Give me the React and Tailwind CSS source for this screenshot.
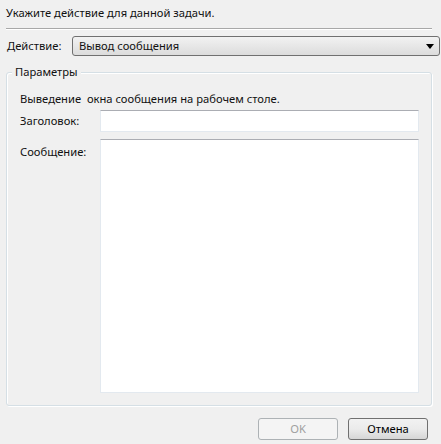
const font = { fontFamily: '"Noto Sans", "Open Sans", sans-serif' }

export default function App() {
  return (
    <div
      className="w-[441px] h-[444px] bg-[#f0f0f0] text-[11.2px] text-[#111] flex flex-col px-[6px] overflow-hidden"
      style={font}
    >
      {/* Header */}
      <div className="h-[28px] flex items-center leading-none pb-[2px]">
        Укажите действие для данной задачи.
      </div>
      <div className="h-[2px] mr-[3px] border-t border-[#a8a8a8] border-b border-b-white" />

      {/* Action row */}
      <div className="flex items-center mt-[6px] h-[20px]">
        <span className="w-[66px] pl-[1px]">Действие:</span>
        <div className="flex-1 h-[20px] -mr-[5px] rounded-[3px] border border-[#707070] bg-gradient-to-b from-[#f2f2f2] to-[#dcdcdc] flex items-center px-[6px]">
          <span className="flex-1">Вывод сообщения</span>
          <svg width="8" height="5" viewBox="0 0 8 5" className="mr-[-1px]">
            <path d="M0 0h8L4 5z" fill="#000" />
          </svg>
        </div>
      </div>

      {/* Group box */}
      <div className="relative mt-[16px] mr-[3px] h-[334px] border border-[#d5dfe5] rounded-[3px] shadow-[inset_1px_1px_0_#fff,1px_1px_0_#fff] pl-[13px] pr-[12px] pt-[18px] flex flex-col">
        <span className="absolute left-[5px] -top-[9px] px-[3px] bg-[#f0f0f0] leading-[16px]">
          Параметры
        </span>
        <div className="leading-[16px]">Выведение&nbsp; окна сообщения на рабочем столе.</div>
        <div className="flex mt-[3px] items-start">
          <span className="w-[80px] leading-[16px] pt-[3px]">Заголовок:</span>
          <div className="flex-1 h-[22px] bg-white border border-[#e3e9ef] border-t-[#abadb3]" />
        </div>
        <div className="flex mt-[7px] items-start">
          <span className="w-[80px] leading-[16px] pt-[5px]">Сообщение:</span>
          <div className="flex-1 h-[254px] bg-white border border-[#e3e9ef] border-t-[#abadb3]" />
        </div>
      </div>

      {/* Buttons */}
      <div className="flex justify-end gap-[10px] mt-[12px] mr-[7px]">
        <button className="w-[80px] h-[22px] rounded-[3px] border border-[#adb2b5] bg-[#f4f4f4] text-[#a0a0a0]">
          OK
        </button>
        <button className="w-[80px] h-[22px] rounded-[3px] border border-[#707070] bg-gradient-to-b from-[#f2f2f2] via-[#ebebeb] to-[#d6d6d6] text-black">
          Отмена
        </button>
      </div>
    </div>
  )
}
